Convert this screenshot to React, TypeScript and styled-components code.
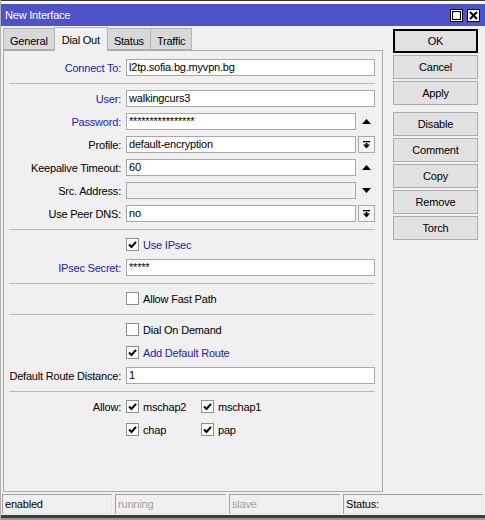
import React from "react";
import styled, { createGlobalStyle } from "styled-components";

const GlobalStyle = createGlobalStyle`
  html, body {
    margin: 0;
    padding: 0;
    background: #f0f0f0;
  }
  body {
    font-family: "Liberation Sans", Arial, sans-serif;
    font-size: 11px;
    letter-spacing: -0.2px;
    color: #000;
  }
  * { box-sizing: border-box; }
`;

//#region Window chrome
const Window = styled.div`
  width: 485px;
  height: 520px;
  display: flex;
  flex-direction: column;
  background: #f0f0f0;
  overflow: hidden;
  border-left: 1px solid #b0b0b0;
`;

const TopEdge = styled.div`
  height: 4px;
  background: #fafafa;
  border-top: 1px solid #3a3a3a;
`;

const TitleBar = styled.div`
  height: 22px;
  background: #4f52c8;
  color: #fff;
  display: flex;
  align-items: center;
  justify-content: space-between;
  padding: 0 5px 0 4px;
`;

const TitleButtons = styled.div`
  display: flex;
  gap: 4px;
`;

const TitleButton = styled.div`
  width: 13px;
  height: 13px;
  background: #fff;
  border: 1px solid #000;
  display: flex;
  align-items: center;
  justify-content: center;
`;

const Body = styled.div`
  flex: 1;
  display: flex;
  padding-left: 2px;
`;

const LeftColumn = styled.div`
  width: 380px;
  display: flex;
  flex-direction: column;
`;

const TabBar = styled.div`
  height: 24px;
  display: flex;
  align-items: flex-end;
`;

const Tab = styled.div<{ $active?: boolean }>`
  height: ${(p) => (p.$active ? 24 : 22)}px;
  padding: 0 ${(p) => (p.$active ? 7 : 6)}px;
  display: flex;
  align-items: center;
  padding-top: ${(p) => (p.$active ? 0 : 3)}px;
  background: ${(p) => (p.$active ? "#f0f0f0" : "#d9d9d9")};
  border: 1px solid #b4b4b4;
  border-bottom: ${(p) => (p.$active ? "none" : "1px solid #b4b4b4")};
  margin-right: -1px;
  position: relative;
  z-index: ${(p) => (p.$active ? 1 : 0)};
  margin-bottom: ${(p) => (p.$active ? -1 : 0)}px;
`;

const Panel = styled.div`
  flex: 1;
  margin-bottom: 1px;
  border: 1px solid #a9a9a9;
  padding: 5px 7px 0 5px;
  display: flex;
  flex-direction: column;
`;

const ButtonColumn = styled.div`
  margin-left: 10px;
  padding-top: 3px;
  width: 85px;
  display: flex;
  flex-direction: column;
  gap: 2px;
`;

const Button = styled.div<{ $default?: boolean; $spaced?: boolean }>`
  height: 24px;
  background: #e1e1e1;
  border: ${(p) => (p.$default ? "2px solid #000" : "1px solid #adadad")};
  display: flex;
  align-items: center;
  justify-content: center;
  margin-top: ${(p) => (p.$spaced ? 5 : 0)}px;
`;

const StatusBar = styled.div`
  height: 22px;
  display: flex;
  gap: 3px;
  padding: 1px 0 0 1px;
`;

const StatusCell = styled.div<{ $w: number; $dim?: boolean }>`
  width: ${(p) => p.$w}px;
  height: 20px;
  border: 1px solid #a0a0a0;
  border-right-color: #e6e6e6;
  border-bottom-color: #e6e6e6;
  padding-left: 2px;
  display: flex;
  align-items: center;
  color: ${(p) => (p.$dim ? "#a0a0a0" : "#000")};
`;

const BottomEdge = styled.div`
  height: 5px;
  border-top: 3px solid #3c3c3c;
  background: #9a9a9a;
`;
//#endregion

//#region Form
const Row = styled.div`
  height: 23px;
  display: grid;
  grid-template-columns: 112px 249px;
  column-gap: 5px;
  align-items: center;
`;

const Label = styled.div<{ $blue?: boolean }>`
  text-align: right;
  white-space: nowrap;
  color: ${(p) => (p.$blue ? "#2222b8" : "#000")};
`;

const Field = styled.div`
  display: flex;
  align-items: center;
  gap: 2px;
`;

const Input = styled.div<{ $disabled?: boolean }>`
  flex: 1;
  height: 17px;
  line-height: 15px;
  padding: 0 2px;
  border: 1px solid #a8a8a8;
  background: ${(p) => (p.$disabled ? "#f0f0f0" : "#fff")};
  white-space: nowrap;
  overflow: hidden;
`;

const Side = styled.div<{ $boxed?: boolean }>`
  width: 17px;
  height: 17px;
  display: flex;
  align-items: center;
  justify-content: center;
  border: ${(p) => (p.$boxed ? "1px solid #a8a8a8" : "none")};
  background: ${(p) => (p.$boxed ? "#f4f4f4" : "transparent")};
`;

const Sep = styled.div`
  height: 1px;
  background: #b9b9b9;
  margin: 4px 0 3px;
`;

const CheckLine = styled.div<{ $blue?: boolean }>`
  display: flex;
  align-items: center;
  gap: 4px;
  color: ${(p) => (p.$blue ? "#2222b8" : "#000")};
`;

const Box = styled.div`
  width: 13px;
  height: 13px;
  border: 1px solid #8f8f8f;
  background: #fff;
  display: flex;
  align-items: center;
  justify-content: center;
`;

const AllowGrid = styled.div`
  display: grid;
  grid-template-columns: 75px 75px;
`;
//#endregion

const Caret = ({ up }: { up?: boolean }) => (
  <svg width="9" height="5" viewBox="0 0 9 5">
    <polygon points={up ? "0,5 4.5,0 9,5" : "0,0 9,0 4.5,5"} fill="#000" />
  </svg>
);

const DropIcon = () => (
  <svg width="9" height="9" viewBox="0 0 9 9">
    <rect x="1" y="1" width="7" height="1.3" fill="#000" />
    <rect x="3.6" y="3" width="1.8" height="2" fill="#000" />
    <polygon points="1,4.5 8,4.5 4.5,8.5" fill="#000" />
  </svg>
);

function Check({ checked, label, blue }: { checked?: boolean; label: string; blue?: boolean }) {
  return (
    <CheckLine $blue={blue}>
      <Box>
        {checked && (
          <svg width="9" height="9" viewBox="0 0 9 9">
            <path d="M1 4.5 L3.5 7 L8 1.8" stroke="#000" strokeWidth="2" fill="none" />
          </svg>
        )}
      </Box>
      {label}
    </CheckLine>
  );
}

function TextRow(props: {
  label: string;
  value?: string;
  blue?: boolean;
  side?: "up" | "down" | "drop";
  disabled?: boolean;
}) {
  return (
    <Row>
      <Label $blue={props.blue}>{props.label}</Label>
      <Field>
        <Input $disabled={props.disabled}>{props.value}</Input>
        {props.side === "up" && (
          <Side>
            <Caret up />
          </Side>
        )}
        {props.side === "down" && (
          <Side>
            <Caret />
          </Side>
        )}
        {props.side === "drop" && (
          <Side $boxed>
            <DropIcon />
          </Side>
        )}
      </Field>
    </Row>
  );
}

function CheckRow({ label, checked, blue }: { label: string; checked?: boolean; blue?: boolean }) {
  return (
    <Row>
      <span />
      <Check label={label} checked={checked} blue={blue} />
    </Row>
  );
}

export default function App() {
  return (
    <>
      <GlobalStyle />
      <Window>
        <TopEdge />
        <TitleBar>
          <span>New Interface</span>
          <TitleButtons>
            <TitleButton>
              <svg width="9" height="9" viewBox="0 0 9 9">
                <rect x="0.5" y="0.5" width="8" height="8" fill="none" stroke="#000" strokeWidth="1.2" />
              </svg>
            </TitleButton>
            <TitleButton>
              <svg width="9" height="9" viewBox="0 0 9 9">
                <path d="M1 1 L8 8 M8 1 L1 8" stroke="#000" strokeWidth="2" />
              </svg>
            </TitleButton>
          </TitleButtons>
        </TitleBar>
        <Body>
          <LeftColumn>
            <TabBar>
              <Tab>General</Tab>
              <Tab $active>Dial Out</Tab>
              <Tab>Status</Tab>
              <Tab>Traffic</Tab>
            </TabBar>
            <Panel>
              <TextRow label="Connect To:" value="l2tp.sofia.bg.myvpn.bg" blue />
              <Sep />
              <TextRow label="User:" value="walkingcurs3" blue />
              <TextRow label="Password:" value="****************" blue side="up" />
              <TextRow label="Profile:" value="default-encryption" side="drop" />
              <TextRow label="Keepalive Timeout:" value="60" side="up" />
              <TextRow label="Src. Address:" disabled side="down" />
              <TextRow label="Use Peer DNS:" value="no" side="drop" />
              <Sep />
              <CheckRow label="Use IPsec" checked blue />
              <TextRow label="IPsec Secret:" value="*****" blue />
              <Sep />
              <CheckRow label="Allow Fast Path" />
              <Sep />
              <CheckRow label="Dial On Demand" />
              <CheckRow label="Add Default Route" checked blue />
              <TextRow label="Default Route Distance:" value="1" />
              <Sep />
              <Row>
                <Label>Allow:</Label>
                <AllowGrid>
                  <Check label="mschap2" checked />
                  <Check label="mschap1" checked />
                </AllowGrid>
              </Row>
              <Row>
                <span />
                <AllowGrid>
                  <Check label="chap" checked />
                  <Check label="pap" checked />
                </AllowGrid>
              </Row>
            </Panel>
          </LeftColumn>
          <ButtonColumn>
            <Button $default>OK</Button>
            <Button>Cancel</Button>
            <Button>Apply</Button>
            <Button $spaced>Disable</Button>
            <Button>Comment</Button>
            <Button>Copy</Button>
            <Button>Remove</Button>
            <Button>Torch</Button>
          </ButtonColumn>
        </Body>
        <StatusBar>
          <StatusCell $w={110}>enabled</StatusCell>
          <StatusCell $w={111} $dim>running</StatusCell>
          <StatusCell $w={111} $dim>slave</StatusCell>
          <StatusCell $w={140}>Status:</StatusCell>
        </StatusBar>
        <BottomEdge />
      </Window>
    </>
  );
}
